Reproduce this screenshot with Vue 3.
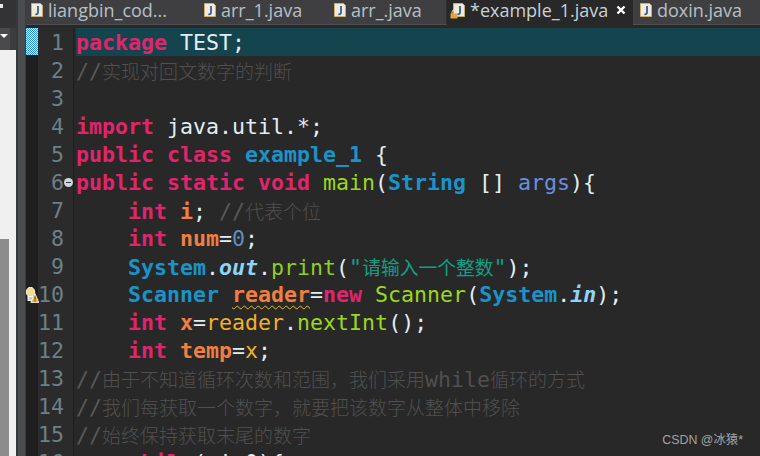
<script setup>
const lines = [
  [['k','package'],['p',' TEST;']],
  [['c','//'],['cj','实现对回文数字的判断']],
  [],
  [['k','import'],['p',' java.util.*;']],
  [['k','public class'],['p',' '],['t','example_1'],['p',' {']],
  [['k','public static void'],['p',' '],['m','main'],['p','('],['t','String'],['p',' [] '],['a','args'],['p','){']],
  [['p','    '],['k','int'],['p',' '],['v','i'],['p','; '],['c','//'],['cj','代表个位']],
  [['p','    '],['k','int'],['p',' '],['v','num'],['p','='],['n','0'],['p',';']],
  [['p','    '],['t','System'],['p','.'],['f','out'],['p','.'],['l','print'],['p','('],['s','"'],['sj','请输入一个整数'],['s','"'],['p',');']],
  [['p','    '],['t','Scanner'],['p',' '],['w','reader'],['p','='],['k','new'],['p',' '],['m','Scanner'],['p','('],['t','System'],['p','.'],['f','in'],['p',');']],
  [['p','    '],['k','int'],['p',' '],['v','x'],['p','='],['r','reader'],['p','.'],['m','nextInt'],['p','();']],
  [['p','    '],['k','int'],['p',' '],['v','temp'],['p','='],['r','x'],['p',';']],
  [['c','//'],['cj','由于不知道循环次数和范围，我们采用'],['cb','while'],['cj','循环的方式']],
  [['c','//'],['cj','我们每获取一个数字，就要把该数字从整体中移除']],
  [['c','//'],['cj','始终保持获取末尾的数字']],
  [['p','    '],['k','while'],['p','(x!=0){']],
]
const tabs = [
  { name: 'liangbin_cod...', cls: 't1' },
  { name: 'arr_1.java', cls: 't2' },
  { name: 'arr_.java', cls: 't3' },
  { name: '*example_1.java', cls: 't4', active: true },
  { name: 'doxin.java', cls: 't5' },
]
</script>

<template>
  <div class="shot">
    <aside class="side">
      <div class="side-top"><span class="side-chip"></span></div>
      <div class="side-tool"><span class="side-box"><span class="side-arrow"></span></span></div>
      <div class="side-panel">
        <div class="side-white"></div>
        <div class="side-gray"></div>
      </div>
    </aside>
    <div class="sash"></div>
    <main class="main">
      <div class="tabs">
        <div v-for="t in tabs" :key="t.name" class="tab" :class="[t.cls, { active: t.active }]">
          <span class="file">
            <svg width="12" height="14" viewBox="0 0 12 14">
              <path d="M.5.5h9l2 2v11H.5z" fill="#f1ecd9" stroke="#c9ae6e"/>
              <path d="M7 3v6.500c0 1.500-1.200 2-2.600 1.600" fill="none" stroke="#2f5fa8" stroke-width="1.800"/>
            </svg>
            <svg v-if="t.active" class="lock" width="8" height="10" viewBox="0 0 8 10">
              <path d="M2 5V3a2 2 0 0 1 4 0v2" fill="none" stroke="#e9e2c9"/>
              <rect x="0.500" y="4.500" width="7" height="5" fill="#e5a23a"/>
            </svg>
          </span>
          <span class="tab-name">{{ t.name }}</span>
          <svg v-if="t.active" class="close" width="10" height="10" viewBox="0 0 10 10">
            <path d="M1.500 1.500l7 7M8.500 1.500l-7 7" stroke="#fff" stroke-width="2.400"/>
          </svg>
        </div>
      </div>
      <div class="editor">
        <div class="ruler">
          <div class="ruler-mark"></div>
          <svg class="bulb" width="13" height="16" viewBox="0 0 13 16">
            <ellipse cx="4.500" cy="5" rx="4.200" ry="4.700" fill="#f6dc90" stroke="#fff6d8"/>
            <rect x="2" y="9.500" width="5" height="4" fill="#cfcab8" stroke="#fff"/>
            <path d="M9 6.500l3.800 9H4.800z" fill="#eeb02c" stroke="#fff" stroke-width=".8"/>
            <path d="M9 9.500v3M9 13.500v1" stroke="#333"/>
          </svg>
        </div>
        <div class="gutter">
          <div v-for="(l, i) in lines" :key="i" class="num">{{ i + 1 }}<span v-if="i === 5" class="fold"></span></div>
        </div>
        <div class="code">
          <div v-for="(l, i) in lines" :key="i" class="line" :class="{ cur: i === 0 }"><span v-for="(tok, j) in l" :key="j" :class="tok[0]">{{ tok[1] }}</span></div>
        </div>
        <div class="mark">CSDN @冰猿*</div>
      </div>
    </main>
  </div>
</template>

<style>
html, body { margin: 0; background: #282828; overflow: hidden; }
</style>

<style scoped>
.shot { width: 760px; height: 456px; display: flex; overflow: hidden; background: #282828; }
.side { width: 16px; flex: none; display: flex; flex-direction: column; background: #3c3c3f; }
.side-top { height: 28px; position: relative; background: #333336; }
.side-chip { position: absolute; left: 0; top: 4px; width: 3px; height: 4px; background: #e8e8e8; }
.side-tool { height: 22px; background: #3c3c3f; }
.side-box { display: block; position: relative; width: 10px; height: 22px; background: #4a4a4d; }
.side-arrow { position: absolute; left: 0; top: 6px; width: 0; height: 0; border-style: solid; border-width: 4px 4px 0 4px; border-color: #fff transparent transparent transparent; }
.side-panel { flex: 1; display: flex; flex-direction: column; background: #f0f0f0; }
.side-white { height: 189px; }
.side-gray { flex: 1; width: 9px; background: #8c8c8c; }
.sash { width: 10px; flex: none; background: #4a4d50; border-left: 2px solid #36383a; border-right: 1px solid #3a3c3e; box-sizing: border-box; }
.main { flex: 1; min-width: 0; display: flex; flex-direction: column; }
.tabs { height: 28px; flex: none; display: flex; background: #282828; font-family: "Open Sans", "Liberation Sans", sans-serif; font-size: 18px; line-height: 18px; color: #b6c0c8; }
.tab { height: 25px; display: flex; align-items: center; gap: 5px; padding: 0 0 5px 7px; box-sizing: border-box; white-space: nowrap; background: #3f3f42; border-bottom: 1px solid #4f4f52; }
.t1 { width: 171px; padding-left: 5px; }
.t2 { width: 131px; }
.t3 { width: 119px; padding-left: 6px; border-right: 1px solid #2e2e30; }
.t4 { width: 186px; padding-left: 6px; background: #282828; border-bottom: 0; }
.t5 { flex: 1; }
.active { color: #c9d2d8; }
.file { position: relative; display: flex; flex: none; }
.lock { position: absolute; left: -3px; top: 6px; }
.close { margin-left: 3px; flex: none; }
.editor { position: relative; flex: 1; min-height: 0; display: flex; background: #282828; }
.ruler { width: 12px; flex: none; background: #1f1f1f; position: relative; }
.ruler-mark { width: 12px; height: 27px; background-color: #1f8fe8; background-image: conic-gradient(#fff 25%, transparent 0 50%, #fff 0 75%, transparent 0); background-size: 2px 2px; }
.bulb { position: absolute; left: 0; top: 259px; }
.gutter { width: 26px; flex: none; padding-right: 9px; border-right: 1px solid #1e1e1e; font: 21.6px/30px "DejaVu Sans Mono", monospace; color: #6c8088; text-align: right; background: #2b2b2b; }
.num { height: 28px; position: relative; }
.fold { position: absolute; right: -9px; top: 10px; width: 9px; height: 9px; border-radius: 50%; background: linear-gradient(#2b3a44, #2b3a44) center / 5px 1px no-repeat #cfd6dc; }
.code { flex: 1; min-width: 0; margin-left: 2px; font: 21.6px/30px "DejaVu Sans Mono", monospace; color: #e6eef2; white-space: pre; }
.line { height: 28px; }
.cur { background: #14454f; }
.k { color: #e0256c; font-weight: 700; }
.p { color: #e3edf3; }
.t { color: #1b93c8; font-weight: 700; }
.m { color: #9bd81e; }
.l { color: #8fce22; }
.a { color: #6a8fe0; }
.v { color: #f07f40; font-weight: 700; }
.w { color: #f07f40; font-weight: 700; text-decoration: underline wavy #e6c020 1px; text-underline-offset: 3px; }
.r { color: #f2b02a; }
.n { color: #5f8fb8; }
.f { color: #8fd4f6; font-style: italic; font-weight: 700; }
.s { color: #12a085; }
.sj { color: #12a085; font-family: "Noto Sans CJK SC", sans-serif; font-size: 18.800px; }
.c { color: #585858; }
.cb { color: #505050; }
.cj { color: #505050; font-family: "Noto Sans CJK SC", sans-serif; font-size: 19px; font-weight: 300; }
.mark { position: absolute; right: 17px; bottom: 7px; font: 12.4px/18px "Liberation Sans", "Noto Sans CJK SC", sans-serif; color: #a2a2a2; }
</style>
